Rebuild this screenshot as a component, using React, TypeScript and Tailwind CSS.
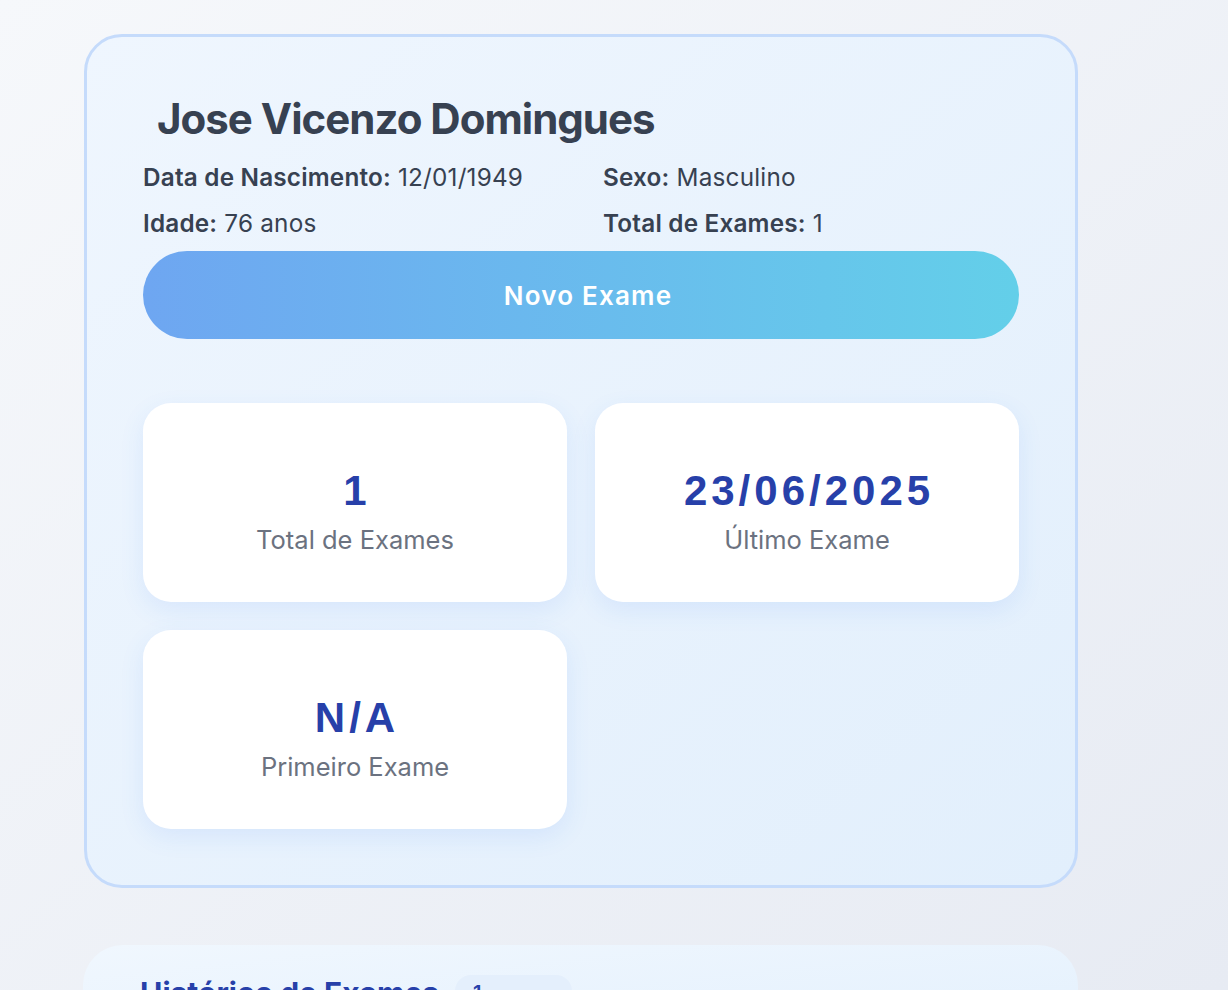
import React from "react";

function Stat({ value, label }: { value: string; label: string }) {
  return (
    <div className="flex h-[199px] flex-col items-center rounded-[28px] bg-white pt-[64px] shadow-[0_8px_24px_rgba(59,130,246,0.10)]">
      <div className="pl-[4px] font-['Liberation_Sans',sans-serif] text-[42px] font-bold leading-[48px] tracking-[4px] text-[#2740a9]">{value}</div>
      <div className="mt-[9px] text-[25.5px] leading-[32px] text-[#6b7280]">{label}</div>
    </div>
  );
}

export default function App() {
  return (
    <div className="h-[990px] overflow-hidden bg-gradient-to-br from-[#f6f8fb] to-[#e7ebf3] font-['Inter',sans-serif]">
      <div className="pl-[84px] pt-[34px] w-[1078px]">
        <div className="rounded-[38px] border-[3px] border-[#c5dbfb] bg-gradient-to-br from-[#eff6fe] to-[#e2effc] px-[56px] pb-[56px] pt-[55px]">
          <h1 className="pl-[14px] text-[42px] font-bold leading-[54px] tracking-[-1px] text-[#374151]">Jose Vicenzo Domingues</h1>
          <div className="mt-[16px] grid grid-cols-2 gap-x-[44px] gap-y-[16px] text-[24.3px] leading-[30px] tracking-[0.2px] text-[#374151]">
            <div><span className="font-semibold">Data de Nascimento:</span> 12/01/1949</div>
            <div><span className="font-semibold">Sexo:</span> Masculino</div>
            <div><span className="font-semibold">Idade:</span> 76 anos</div>
            <div><span className="font-semibold">Total de Exames:</span> 1</div>
          </div>
          <button className="mt-[13px] flex h-[88px] w-full items-center justify-center rounded-full bg-gradient-to-r from-[#6ea6f1] to-[#63cfe9] pl-[14px] text-[26px] font-semibold tracking-[1.2px] text-white">
            Novo Exame
          </button>
          <div className="mt-[64px] grid grid-cols-2 gap-[28px]">
            <Stat value="1" label="Total de Exames" />
            <Stat value="23/06/2025" label="Último Exame" />
            <Stat value="N/A" label="Primeiro Exame" />
          </div>
        </div>
      </div>
      <div className="ml-[83px] mt-[57px] w-[995px] rounded-[40px] bg-gradient-to-br from-[#f0f7fe] to-[#e3f0fd] px-[57px] pt-[28px] pb-[40px]">
        <div className="flex items-center gap-[16px]">
          <h2 className="text-[30px] font-bold leading-[40px] text-[#2740a9]">Histórico de Exames</h2>
          <span className="w-[117px] rounded-[16px] bg-[#e4effc] px-[18px] text-[20px] font-semibold leading-[36px] text-[#2740a9]">1</span>
        </div>
      </div>
    </div>
  );
}
